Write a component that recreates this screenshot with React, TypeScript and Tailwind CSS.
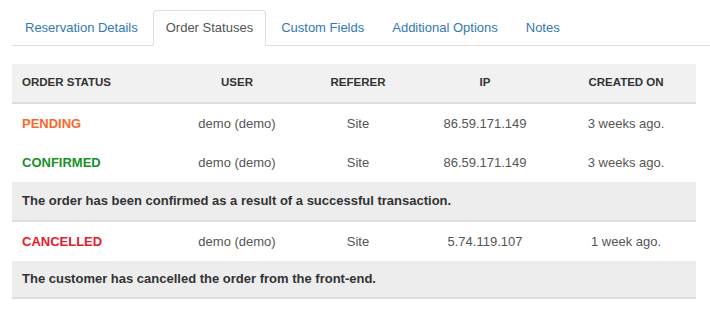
import React from 'react';

const tabs = ['Reservation Details', 'Order Statuses', 'Custom Fields', 'Additional Options', 'Notes'];

interface StatusRow {
  status: string;
  color: string;
  user: string;
  referer: string;
  ip: string;
  created: string;
  note?: string;
}

const rows: StatusRow[] = [
  { status: 'PENDING', color: 'text-[#f7692b]', user: 'demo (demo)', referer: 'Site', ip: '86.59.171.149', created: '3 weeks ago.' },
  {
    status: 'CONFIRMED',
    color: 'text-[#16902a]',
    user: 'demo (demo)',
    referer: 'Site',
    ip: '86.59.171.149',
    created: '3 weeks ago.',
    note: 'The order has been confirmed as a result of a successful transaction.',
  },
  {
    status: 'CANCELLED',
    color: 'text-[#e9182c]',
    user: 'demo (demo)',
    referer: 'Site',
    ip: '5.74.119.107',
    created: '1 week ago.',
    note: 'The customer has cancelled the order from the front-end.',
  },
];

const cols = 'grid grid-cols-[160px_130px_112px_142px_140px] items-center';

export default function App() {
  return (
    <div className="min-h-[318px] bg-white pl-[12px] pt-[10px] font-['Liberation_Sans',Arial,sans-serif]">
      <ul className="flex border-b border-[#dddddd]">
        {tabs.map((t) => {
          const active = t === 'Order Statuses';
          return (
            <li
              key={t}
              className={`-mb-px mr-[2px] flex h-[36px] items-center rounded-t-[4px] border px-[12px] text-[13px] ${
                active
                  ? 'border-[#dddddd] border-b-white bg-white text-[#555555]'
                  : 'border-transparent text-[#3377b5]'
              }`}
            >
              {t}
            </li>
          );
        })}
      </ul>

      <div className="mt-[18px] w-[684px]">
        <div className={`${cols} h-[40px] border-b-2 border-[#dedede] bg-[#f1f1f1] text-[11.5px] font-bold text-[#333333]`}>
          <div className="pl-[10px]">ORDER STATUS</div>
          <div className="text-center">USER</div>
          <div className="text-center">REFERER</div>
          <div className="text-center">IP</div>
          <div className="text-center">CREATED ON</div>
        </div>

        {rows.map((r, i) => (
          <div key={r.status}>
            <div className={`${cols} h-[39px] text-[13px] text-[#555555]`}>
              <div className={`pl-[10px] font-bold ${r.color}`}>{r.status}</div>
              <div className="text-center">{r.user}</div>
              <div className="text-center">{r.referer}</div>
              <div className="text-center">{r.ip}</div>
              <div className="text-center">{r.created}</div>
            </div>
            {r.note && (
              <div
                className={`flex items-center border-b-2 border-[#dedede] bg-[#ededed] pl-[10px] text-[13px] font-bold text-[#333333] ${
                  i === 1 ? 'h-[40px]' : 'h-[38px]'
                }`}
              >
                {r.note}
              </div>
            )}
          </div>
        ))}
      </div>
    </div>
  );
}
